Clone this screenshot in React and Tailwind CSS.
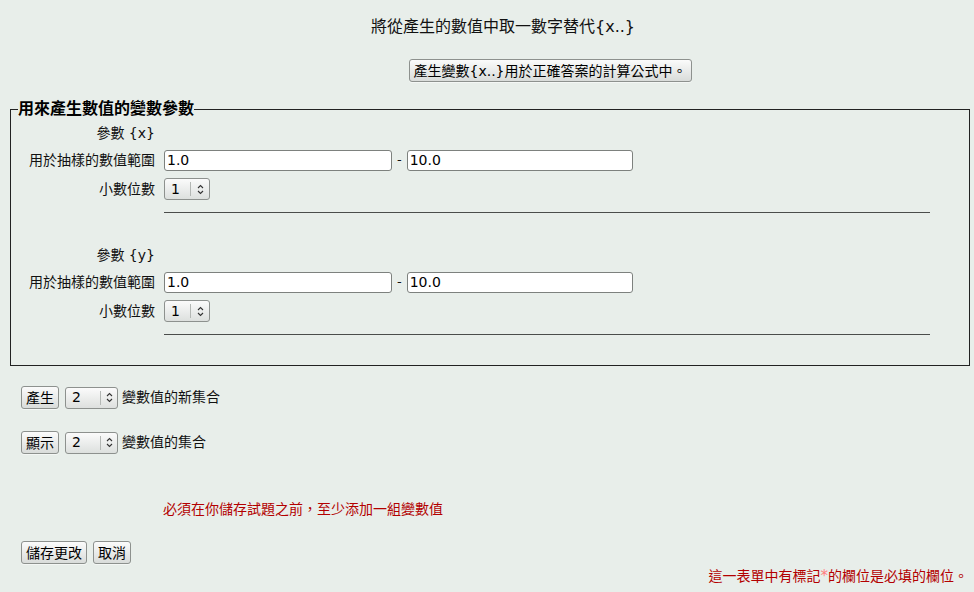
import React from 'react'

const font = { fontFamily: '"DejaVu Sans", "Noto Sans CJK TC", sans-serif' }

function Btn({ children, className = '' }) {
    return (
        <button
            type="button"
            className={"h-[23px] px-[4px] rounded-[3px] border border-[#8d918e] bg-gradient-to-b from-[#fbfbfb] to-[#d9dcda] text-[14px] leading-none text-black shadow-[0_1px_0_#ffffff80] " + className}
        >
            {children}
        </button>
    )
}

function Chevrons() {
    return (
        <svg width="7" height="11" viewBox="0 0 7 11" className="text-[#333]">
            <path d="M1 4 L3.5 1.5 L6 4" fill="none" stroke="currentColor" strokeWidth="1.1" />
            <path d="M1 7 L3.5 9.5 L6 7" fill="none" stroke="currentColor" strokeWidth="1.1" />
        </svg>
    )
}

function FakeSelect({ value, width, split }) {
    return (
        <div
            className="flex items-stretch h-[22px] rounded-[3px] border border-[#8d918e] bg-gradient-to-b from-[#fbfbfb] to-[#dde0de] text-[14px] text-black"
            style={{ width }}
        >
            <div className="flex items-center pl-[6px]" style={{ width: split }}>{value}</div>
            <div className="my-[3px] border-l border-[#b3b7b4]" />
            <div className="flex flex-1 items-center justify-center">
                <Chevrons />
            </div>
        </div>
    )
}

function TextBox({ value, width }) {
    return (
        <div
            className="flex items-center h-[21px] rounded-[3px] border border-[#7d817e] bg-white pl-[2px] text-[14px] text-black"
            style={{ width }}
        >
            {value}
        </div>
    )
}

function ParamGroup({ name, first }) {
    return (
        <div className={first ? "pt-[4px]" : "mt-[31px]"}>
            <div className="flex items-center h-[22px]">
                <div className="w-[153px] pr-[9px] text-right">參數 {'{'}{name}{'}'}</div>
            </div>
            <div className="flex items-center h-[24px] mt-[4px]">
                <div className="w-[153px] pr-[9px] text-right">用於抽樣的數值範圍</div>
                <TextBox value="1.0" width="228px" />
                <span className="mx-[5px] text-[13px]">-</span>
                <TextBox value="10.0" width="226px" />
            </div>
            <div className="flex items-center h-[24px] mt-[5px]">
                <div className="w-[153px] pr-[9px] text-right">小數位數</div>
                <FakeSelect value="1" width="46px" split="25px" />
            </div>
            <div className="ml-[153px] mt-[11px] w-[766px] border-t border-[#4a4d4b]" />
        </div>
    )
}

export default function App() {
    return (
        <div className="w-[974px] h-[592px] bg-[#e8eeea] text-[14px] text-[#111] overflow-hidden" style={font}>
            {/* heading */}
            <div className="pt-[18px] pl-[32px] h-[36px] text-center text-[16px] leading-[18px]">將從產生的數值中取一數字替代{'{x..}'}</div>

            <div className="flex justify-center pl-[164px] pr-[38px] mt-[23px]">
                <Btn>產生變數{'{x..}'}用於正確答案的計算公式中。</Btn>
            </div>

            {/* fieldset */}
            <fieldset className="ml-[10px] mt-[18px] w-[960px] border border-[#222] pb-[30px]">
                <legend className="ml-[7px] px-0 text-[16px] font-bold leading-[18px] text-black">用來產生數值的變數參數</legend>
                <ParamGroup name="x" first />
                <ParamGroup name="y" />
            </fieldset>

            {/* generate / show rows */}
            <div className="flex items-center gap-[6px] ml-[21px] mt-[20px] h-[23px]">
                <Btn>產生</Btn>
                <FakeSelect value="2" width="53px" split="34px" />
                <span className="-ml-[2px]">變數值的新集合</span>
            </div>
            <div className="flex items-center gap-[6px] ml-[21px] mt-[22px] h-[23px]">
                <Btn>顯示</Btn>
                <FakeSelect value="2" width="53px" split="34px" />
                <span className="-ml-[2px]">變數值的集合</span>
            </div>

            <div className="ml-[163px] mt-[46px] h-[18px] leading-[18px] text-[#b30000]">
                必須在你儲存試題之前，至少添加一組變數值
            </div>

            <div className="flex gap-[6px] ml-[21px] mt-[23px]">
                <Btn>儲存更改</Btn>
                <Btn>取消</Btn>
            </div>

            <div className="flex justify-end pr-[6px] mt-[3px] leading-[18px] text-[#b30000]">
                <span>這一表單中有標記<span className="text-[15px] text-[#ff7f7f]">*</span>的欄位是必填的欄位。</span>
            </div>
        </div>
    )
}
